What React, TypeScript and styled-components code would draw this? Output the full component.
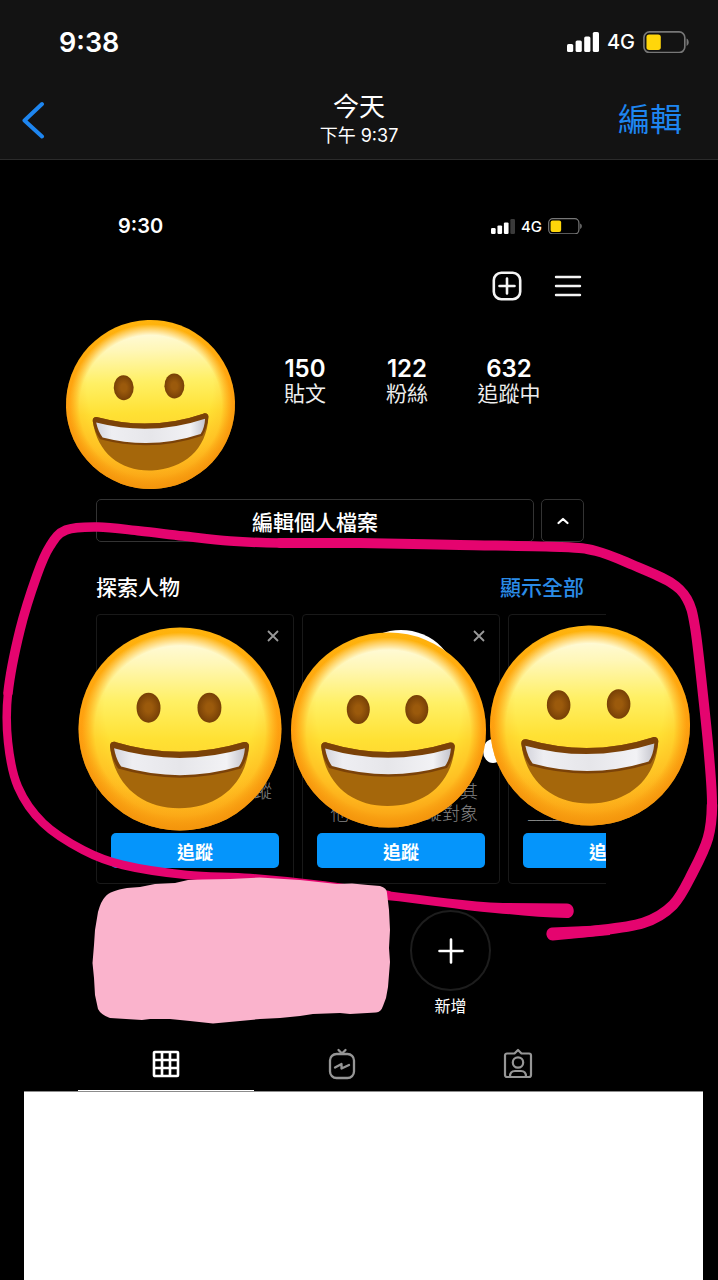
import React from 'react';
import styled, { createGlobalStyle } from 'styled-components';

const GlobalStyle = createGlobalStyle`
  * { box-sizing: border-box; }
  body {
    margin: 0;
    background: #000;
    color: #fff;
    font-family: Inter, 'Noto Sans CJK TC', sans-serif;
  }
  button {
    margin: 0;
    padding: 0;
    border: 0;
    background: none;
    color: inherit;
    font-family: inherit;
  }
  svg { display: block; flex: none; }
`;

const Page = styled.div`
  display: flex;
  flex-direction: column;
  min-height: 100vh;
`;

const Header = styled.header`
  background: #131313;
  border-bottom: 1px solid #2b2b2b;
  padding-bottom: 3px;
`;

const StatusBar = styled.div`
  display: flex;
  align-items: center;
  justify-content: space-between;
  height: 84px;
  padding: 0 29px 0 59px;
`;

const Clock = styled.time<{ $size: number }>`
  font-size: ${(p) => p.$size}px;
  font-weight: 600;
`;

const StatusIcons = styled.div<{ $gap: number }>`
  display: flex;
  align-items: center;
  gap: ${(p) => p.$gap}px;
`;

const Network = styled.span<{ $size: number }>`
  font-size: ${(p) => p.$size}px;
  font-weight: 500;
`;

const NavBar = styled.div`
  display: grid;
  grid-template-columns: 1fr auto 1fr;
  align-items: center;
  height: 72px;
  padding: 0 36px 0 20px;
`;

const BackButton = styled.button`
  justify-self: start;
`;

const EditButton = styled.button`
  justify-self: end;
  color: #1e86f0;
  font-size: 32px;
  font-weight: 400;
  line-height: 40px;
`;

const TitleBlock = styled.div`
  padding-left: 16px;
  text-align: center;
`;

const Title = styled.h1`
  margin: 0;
  font-size: 26px;
  font-weight: 400;
  line-height: 32px;
`;

const Subtitle = styled.p`
  margin: 0;
  font-size: 18px;
  line-height: 26px;
`;

const Stage = styled.main`
  position: relative;
  flex: 1;
  display: flex;
  flex-direction: column;
  width: 100%;
  max-width: 718px;
  margin: 0 auto;
`;

const Screen = styled.section`
  margin: 52px 112px 0 78px;
`;

const InnerStatus = styled.div`
  display: flex;
  align-items: center;
  justify-content: space-between;
  height: 28px;
  padding: 0 24px 0 40px;
`;

const Toolbar = styled.div`
  display: flex;
  align-items: center;
  justify-content: flex-end;
  gap: 32px;
  height: 32px;
  margin-top: 30px;
  padding-right: 24px;
`;

const Stats = styled.dl`
  display: flex;
  justify-content: flex-end;
  margin: 54px 46px 93px 0;
`;

const Stat = styled.div`
  display: flex;
  flex-direction: column-reverse;
  width: 102px;
  text-align: center;
`;

const StatLabel = styled.dt`
  color: #eee;
  font-size: 21px;
  line-height: 24px;
`;

const StatValue = styled.dd`
  margin: 0;
  font-size: 24px;
  line-height: 26px;
  font-weight: 600;
`;

const ProfileActions = styled.div`
  display: flex;
  gap: 7px;
  padding: 0 22px 0 18px;
`;

const OutlineButton = styled.button<{ $square?: boolean }>`
  display: flex;
  align-items: center;
  justify-content: center;
  flex: ${(p) => (p.$square ? '0 0 43px' : '1')};
  height: 43px;
  border: 1px solid #333;
  border-radius: 5px;
  font-size: 21px;
  font-weight: 500;
`;

const DiscoverHeader = styled.div`
  display: flex;
  align-items: center;
  justify-content: space-between;
  height: 30px;
  margin: 29px 22px 13px 18px;
`;

const DiscoverTitle = styled.h2`
  margin: 0;
  font-size: 21px;
  font-weight: 500;
`;

const ShowAll = styled.a`
  color: #2b8ce8;
  font-size: 21px;
  font-weight: 500;
  text-decoration: none;
`;

const Carousel = styled.div`
  display: flex;
  gap: 8px;
  padding-left: 18px;
  overflow: hidden;
`;

const Card = styled.article`
  display: grid;
  grid-template-columns: 1fr;
  grid-template-rows: 114px 1fr 44px 43px;
  flex: 0 0 198px;
  height: 270px;
  padding: 15px 14px;
  border: 1px solid #191919;
  border-radius: 4px;
`;

const Portrait = styled.div<{ $visible: boolean }>`
  grid-area: 1 / 1;
  justify-self: center;
  width: 114px;
  height: 114px;
  border-radius: 50%;
  background: ${(p) => (p.$visible ? '#fff' : 'transparent')};
`;

const CloseButton = styled.button`
  grid-area: 1 / 1;
  place-self: start end;
`;

const Reason = styled.p<{ $align: string }>`
  grid-row: 3;
  height: 44px;
  margin: 0;
  padding: 0 7px 0 5px;
  color: #858585;
  font-size: 18px;
  font-weight: 300;
  line-height: 22px;
  text-align: ${(p) => p.$align};
  white-space: pre;
`;

const FollowButton = styled.button`
  grid-row: 4;
  align-self: end;
  height: 35px;
  border-radius: 5px;
  background: #0595fb;
  font-size: 18px;
  font-weight: 600;
`;

const Highlights = styled.div`
  display: flex;
  justify-content: flex-end;
  margin: 26px 115px 20px 0;
`;

const NewHighlight = styled.button`
  display: flex;
  flex-direction: column;
  align-items: center;
  gap: 5px;
  font-size: 16px;
  line-height: 20px;
`;

const Ring = styled.span`
  display: flex;
  align-items: center;
  justify-content: center;
  width: 81px;
  height: 81px;
  border: 2px solid #1d1d1d;
  border-radius: 50%;
`;

const Tabs = styled.nav`
  display: grid;
  grid-template-columns: repeat(3, 1fr);
`;

const Tab = styled.button<{ $active?: boolean }>`
  display: flex;
  align-items: center;
  justify-content: center;
  height: 55px;
  padding-top: 2px;
  border-bottom: 1px solid ${(p) => (p.$active ? '#fff' : 'transparent')};
  color: ${(p) => (p.$active ? '#fff' : '#969696')};
`;

const BlankPanel = styled.div`
  flex: 1;
  min-height: 120px;
  margin: 0 15px 0 24px;
  border-top: 1px solid #8c8c8c;
  background: #fff;
`;

const Markup = styled.svg`
  position: absolute;
  top: 0;
  left: 0;
  width: 100%;
  pointer-events: none;
`;

function Signal({ width, weak }: { width: number; weak?: boolean }) {
  return (
    <svg width={width} viewBox="0 0 32 20" fill="#fff" aria-hidden="true">
      <rect x="0" y="12" width="6.2" height="8" rx="1.6" />
      <rect x="8.6" y="8.5" width="6.2" height="11.5" rx="1.6" />
      <rect x="17.2" y="4.5" width="6.2" height="15.5" rx="1.6" />
      <rect x="25.8" y="0" width="6.2" height="20" rx="1.6" fill={weak ? '#3a3a3a' : '#fff'} />
    </svg>
  );
}

function Battery({ width }: { width: number }) {
  return (
    <svg width={width} viewBox="0 0 45 22" aria-hidden="true">
      <rect x="0.9" y="0.9" width="40" height="20.2" rx="5.5" fill="none" stroke="#777" strokeWidth="1.6" />
      <rect x="3.4" y="3.4" width="14" height="15.2" rx="2.6" fill="#ffd60a" />
      <path d="M42.6 7.4c2.8 1.2 2.8 6 0 7.2z" fill="#777" />
    </svg>
  );
}

type FaceProps = { x: number; y: number; r: number; tilt?: number };

function Face({ x, y, r, tilt = 0 }: FaceProps) {
  return (
    <g transform={`translate(${x} ${y}) rotate(${tilt}) scale(${r / 100})`}>
      <circle r="100" fill="url(#faceRim)" />
      <circle r="98" fill="url(#faceGlow)" mask="url(#faceSoft)" />
      <circle r="100" fill="url(#faceEdge)" />
      <ellipse cx="-31" cy="-21" rx="11.8" ry="14.8" fill="url(#eye)" />
      <ellipse cx="29" cy="-21" rx="11.8" ry="14.8" fill="url(#eye)" />
      <path
        d="M-69 17C-69 13-66 12-63 13Q0 32 62 13C66 12 68 14 68 17C65 56 36 78-1 78C-37 78-65 56-69 17Z"
        fill="#a5670b"
      />
      <path
        d="M-69 17C-69 13-66 12-63 13Q0 32 62 13C66 12 68 14 68 17C67 26 64 33 60 39Q0 57-61 39C-65 33-68 26-69 17Z"
        fill="#7b4208"
      />
      <path d="M-65 19Q0 38 64 19Q63 30 58 37Q0 54-58 37Q-63 30-65 19Z" fill="url(#teeth)" />
    </g>
  );
}

type Point = [number, number];

// Catmull-Rom spline through the pen's points, drawn between two of them.
function penPath(points: Point[], from: number, to: number) {
  let d = `M${points[from].join(' ')}`;
  for (let i = from; i < to; i += 1) {
    const p0 = points[Math.max(i - 1, 0)];
    const p1 = points[i];
    const p2 = points[i + 1];
    const p3 = points[Math.min(i + 2, points.length - 1)];
    d += `C${p1[0] + (p2[0] - p0[0]) / 6} ${p1[1] + (p2[1] - p0[1]) / 6}`;
    d += ` ${p2[0] - (p3[0] - p1[0]) / 6} ${p2[1] - (p3[1] - p1[1]) / 6}`;
    d += ` ${p2[0]} ${p2[1]}`;
  }
  return d;
}

const pen: Point[] = [
  [388, 895], [320, 885], [250, 878], [187, 875], [123, 865], [83, 850], [43, 823],
  [18, 787], [8, 742], [8, 693], [20, 630], [37, 575], [50, 546], [66, 530], [98, 527],
  [140, 531], [183, 536], [230, 541], [280, 543], [360, 543], [460, 545], [560, 547],
  [596, 551], [633, 565], [670, 582], [687, 599], [695, 627], [703, 695], [709, 755],
  [712, 805], [708, 838], [693, 872], [673, 905], [643, 923], [593, 931], [552, 934],
];

const penStrokes = [
  { from: 0, to: 9, width: 8.5 },
  { from: 9, to: 18, width: 9.5 },
  { from: 18, to: 29, width: 10 },
  { from: 29, to: 35, width: 10.5 },
];

function MarkupLayer() {
  return (
    <Markup viewBox="0 160 718 930" aria-hidden="true">
      <defs>
        <linearGradient id="faceRim" x1="0" y1="0" x2="0" y2="1">
          <stop offset="0" stopColor="#ffb40c" />
          <stop offset="0.5" stopColor="#ffa00e" />
          <stop offset="1" stopColor="#f0960c" />
        </linearGradient>
        <radialGradient id="faceFade" gradientUnits="userSpaceOnUse" cx="0" cy="2" r="100">
          <stop offset="0.84" stopColor="#fff" />
          <stop offset="0.97" stopColor="#fff" stopOpacity="0" />
        </radialGradient>
        <mask id="faceSoft" maskUnits="userSpaceOnUse" x="-100" y="-100" width="200" height="200">
          <circle r="100" fill="url(#faceFade)" />
        </mask>
        <radialGradient id="faceEdge" cx="0.5" cy="0.4" r="0.6">
          <stop offset="0.62" stopColor="#ffa114" stopOpacity="0" />
          <stop offset="0.8" stopColor="#ffa114" stopOpacity="0.3" />
          <stop offset="1" stopColor="#f4950c" stopOpacity="0.9" />
        </radialGradient>
        <linearGradient id="faceGlow" x1="0" y1="0" x2="0" y2="1">
          <stop offset="0.04" stopColor="#fffbe0" />
          <stop offset="0.17" stopColor="#fff7b8" />
          <stop offset="0.36" stopColor="#fff065" />
          <stop offset="0.55" stopColor="#ffe134" />
          <stop offset="0.75" stopColor="#ffcf2a" />
          <stop offset="1" stopColor="#fbaf1a" />
        </linearGradient>
        <radialGradient id="eye">
          <stop offset="0.3" stopColor="#9b5a0c" />
          <stop offset="1" stopColor="#774006" />
        </radialGradient>
        <linearGradient id="teeth" x1="0" y1="0" x2="1" y2="0">
          <stop offset="0" stopColor="#d4d4dc" />
          <stop offset="0.14" stopColor="#eeeef2" />
          <stop offset="0.5" stopColor="#e6e6ea" />
          <stop offset="0.86" stopColor="#f2f2f5" />
          <stop offset="1" stopColor="#c4c4cc" />
        </linearGradient>
      </defs>

      <ellipse cx="493" cy="751" rx="10" ry="12" fill="#fff" />
      <Face x={150.5} y={404.5} r={84.5} tilt={-2} />
      <Face x={180} y={729} r={101.5} />
      <Face x={388.5} y={730} r={97.5} />
      <Face x={590} y={725.5} r={100} tilt={-1} />

      <g fill="none" stroke="#e5046f" strokeLinecap="round" strokeLinejoin="round">
        {penStrokes.map((s) => (
          <path key={s.from} d={penPath(pen, s.from, s.to)} strokeWidth={s.width} />
        ))}
      </g>
      <path
        d="M386 891C428 896 470 902 503 903L567 903.500C576 904 576 918 567 918C545 918 520 915 495 913C460 910 420 903 386 900Z"
        fill="#e5046f"
      />
      <path d="M552 927.500C544 928 545 941 553 940.500L610 935L610 925Z" fill="#e5046f" />
      <path
        d="M105 897C109 892 116 890 127 888L140 887L155 884L175 883L188 880L203 879.500L230 879L260 877.500L300 880L337 884L352 883.500L368 885L380 886Q387 888 387 893L389 910L390 930L389 948L390 962L388 987L386 998L383 1006Q381 1012 376 1012.500L350 1014L340 1013L313 1014L300 1016L280 1018L260 1019L240 1021L213 1023.500L190 1021L170 1019L150 1019L142 1020L110 1018Q101 1015 98 1009L95 995L94 978L92.500 963L94 945L95 930L98 912Q101 901 105 897Z"
        fill="#fab3cc"
      />
    </Markup>
  );
}

const stats = [
  { value: '150', label: '貼文' },
  { value: '122', label: '粉絲' },
  { value: '632', label: '追蹤中' },
];

const suggestions = [
  { id: 'a', reason: '追蹤', align: 'right', portrait: false },
  { id: 'b', reason: '其\n他 100 位追蹤對象', align: 'right', portrait: true },
  { id: 'c', reason: '\n______', align: 'left', portrait: false },
];

export default function App() {
  return (
    <Page>
      <GlobalStyle />
      <Header>
        <StatusBar>
          <Clock $size={27}>9:38</Clock>
          <StatusIcons $gap={8}>
            <Signal width={32} />
            <Network $size={20}>4G</Network>
            <Battery width={46} />
          </StatusIcons>
        </StatusBar>
        <NavBar>
          <BackButton aria-label="返回">
            <svg width="26" height="38" viewBox="0 0 26 38" fill="none" stroke="#1e86f0" strokeWidth="4" strokeLinecap="round" strokeLinejoin="round">
              <path d="M22 3L4.500 19.500l17.500 16" />
            </svg>
          </BackButton>
          <TitleBlock>
            <Title>今天</Title>
            <Subtitle>下午 9:37</Subtitle>
          </TitleBlock>
          <EditButton>編輯</EditButton>
        </NavBar>
      </Header>

      <Stage>
        <Screen>
          <InnerStatus>
            <Clock $size={20}>9:30</Clock>
            <StatusIcons $gap={6}>
              <Signal width={24} weak />
              <Network $size={15}>4G</Network>
              <Battery width={34} />
            </StatusIcons>
          </InnerStatus>

          <Toolbar>
            <button aria-label="新增貼文">
              <svg width="30" height="30" viewBox="0 0 30 30" fill="none" stroke="#f4f4f4" strokeWidth="2.600" strokeLinecap="round">
                <rect x="1.800" y="1.800" width="26.400" height="26.400" rx="7.500" />
                <path d="M15 7.500v15M7.500 15h15" />
              </svg>
            </button>
            <button aria-label="選單">
              <svg width="28" height="24" viewBox="0 0 28 24" stroke="#f4f4f4" strokeWidth="2.400" strokeLinecap="round">
                <path d="M2 3h24M2 12h24M2 21h24" />
              </svg>
            </button>
          </Toolbar>

          <Stats>
            {stats.map((s) => (
              <Stat key={s.label}>
                <StatLabel>{s.label}</StatLabel>
                <StatValue>{s.value}</StatValue>
              </Stat>
            ))}
          </Stats>

          <ProfileActions>
            <OutlineButton>編輯個人檔案</OutlineButton>
            <OutlineButton $square aria-label="收合">
              <svg width="12" height="8" viewBox="0 0 12 8" fill="none" stroke="#fff" strokeWidth="2.200" strokeLinecap="round" strokeLinejoin="round">
                <path d="M1.500 6L6 2l4.500 4" />
              </svg>
            </OutlineButton>
          </ProfileActions>

          <DiscoverHeader>
            <DiscoverTitle>探索人物</DiscoverTitle>
            <ShowAll href="#all">顯示全部</ShowAll>
          </DiscoverHeader>

          <Carousel>
            {suggestions.map((s) => (
              <Card key={s.id}>
                <Portrait $visible={s.portrait} />
                <CloseButton aria-label="移除">
                  <svg width="12" height="12" viewBox="0 0 12 12" stroke="#999" strokeWidth="1.800">
                    <path d="M1 1l10 10M11 1L1 11" />
                  </svg>
                </CloseButton>
                <Reason $align={s.align}>{s.reason}</Reason>
                <FollowButton>追蹤</FollowButton>
              </Card>
            ))}
          </Carousel>

          <Highlights>
            <NewHighlight>
              <Ring>
                <svg width="26" height="26" viewBox="0 0 26 26" stroke="#fff" strokeWidth="2.600" strokeLinecap="round">
                  <path d="M13 1.500v23M1.500 13h23" />
                </svg>
              </Ring>
              新增
            </NewHighlight>
          </Highlights>

          <Tabs>
            <Tab $active aria-label="貼文">
              <svg width="28" height="28" viewBox="0 0 28 28" fill="none" stroke="currentColor" strokeWidth="2.600">
                <rect x="2" y="2" width="24" height="24" rx="0.800" />
                <path d="M10 2v24M18 2v24M2 10h24M2 18h24" />
              </svg>
            </Tab>
            <Tab aria-label="IGTV">
              <svg width="28" height="32" viewBox="0 0 28 32" fill="none" stroke="currentColor" strokeWidth="2.300" strokeLinecap="round" strokeLinejoin="round">
                <rect x="2" y="6" width="24" height="24" rx="6.500" />
                <path d="M10.500 2L14 5.500 17.500 2" />
                <path d="M7 19.500l6.500-3.500v4.500l7.500-3.500" />
              </svg>
            </Tab>
            <Tab aria-label="被標註的相片">
              <svg width="30" height="32" viewBox="0 0 30 32" fill="none" stroke="currentColor" strokeWidth="2.200" strokeLinecap="round" strokeLinejoin="round">
                <path d="M4 5.500h7.500L15 2l3.500 3.500H26a2 2 0 0 1 2 2V27a2 2 0 0 1-2 2H4a2 2 0 0 1-2-2V7.500a2 2 0 0 1 2-2z" />
                <circle cx="15" cy="14.500" r="5.200" />
                <path d="M7 28.500c0-4 2.500-5.500 5-5.500h6c2.500 0 5 1.500 5 5.500" />
              </svg>
            </Tab>
          </Tabs>
        </Screen>
        <BlankPanel />
        <MarkupLayer />
      </Stage>
    </Page>
  );
}
